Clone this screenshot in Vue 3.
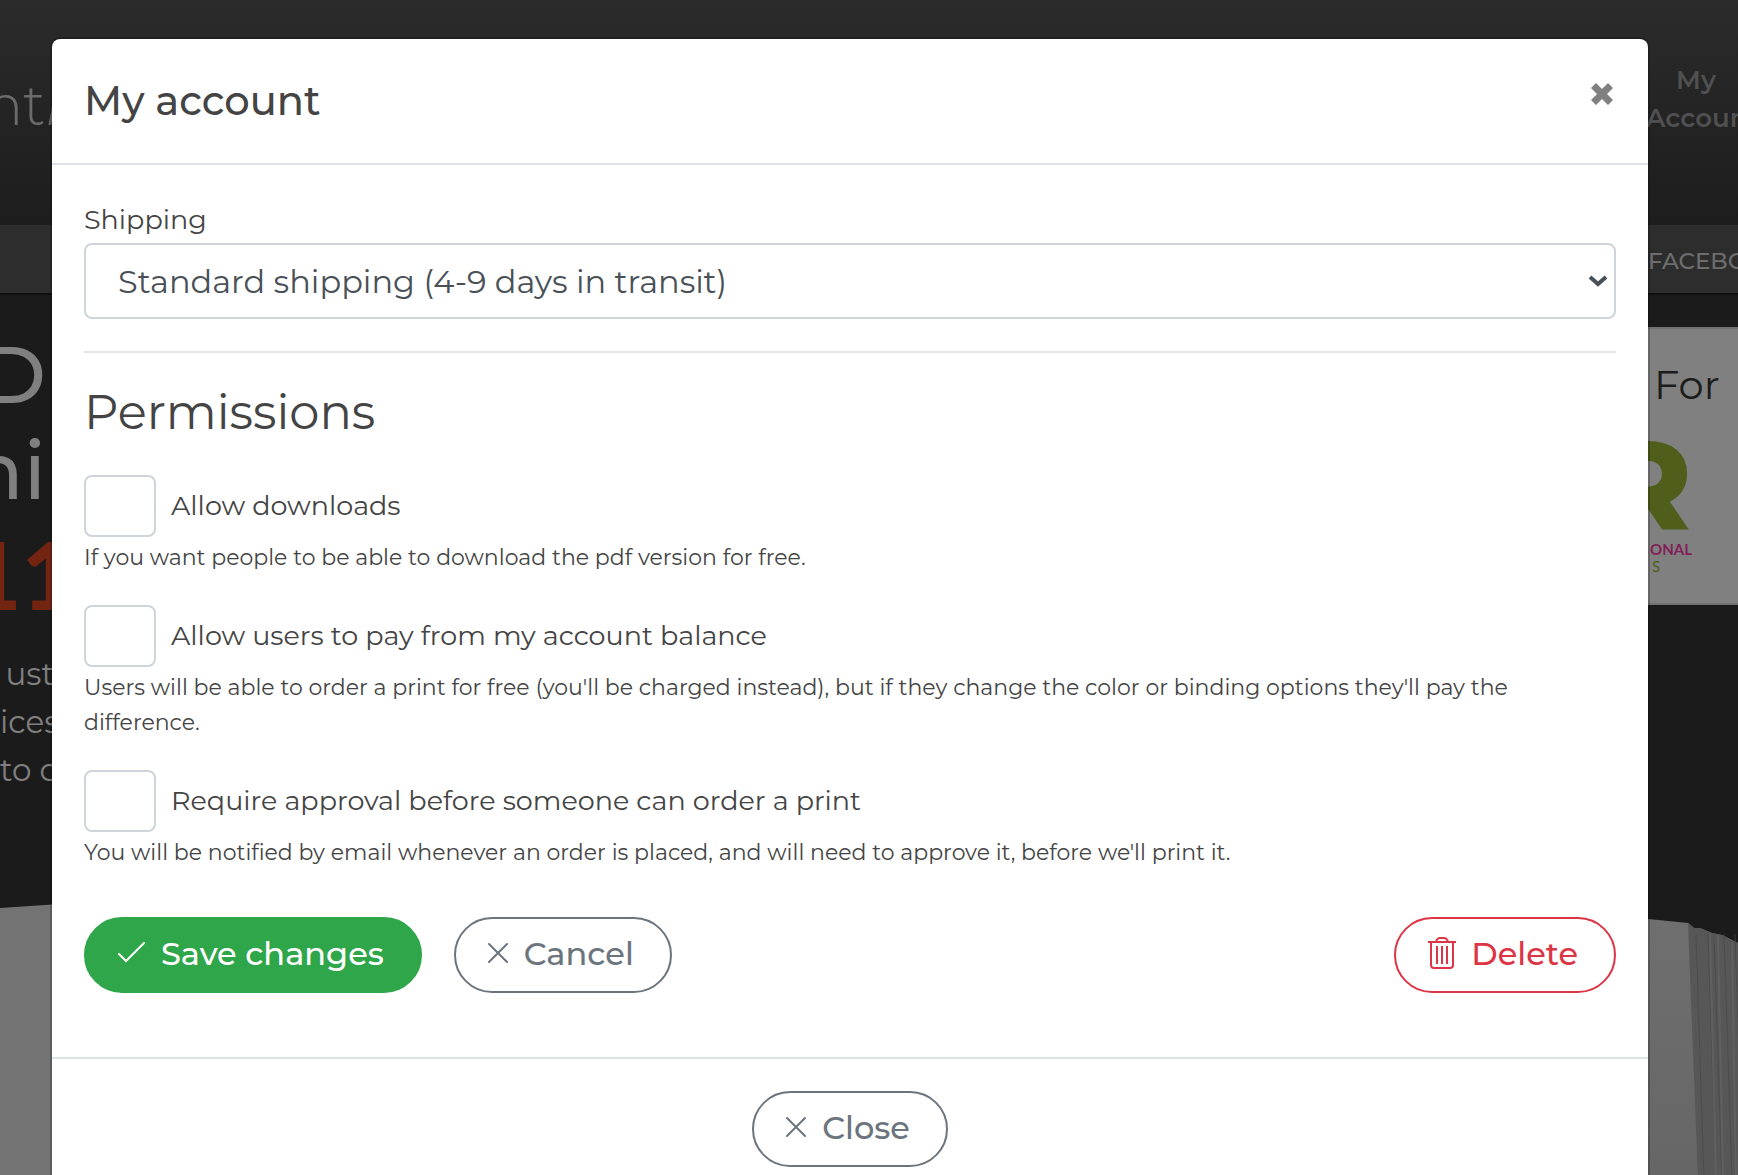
<script setup>
import { ref } from 'vue'

const shipping = ref('standard')
const permissions = ref([
  {
    id: 'downloads',
    label: 'Allow downloads',
    help: 'If you want people to be able to download the pdf version for free.',
    on: false,
  },
  {
    id: 'balance',
    label: 'Allow users to pay from my account balance',
    help: "Users will be able to order a print for free (you'll be charged instead), but if they change the color or binding options they'll pay the difference.",
    on: false,
  },
  {
    id: 'approval',
    label: 'Require approval before someone can order a print',
    help: "You will be notified by email whenever an order is placed, and will need to approve it, before we'll print it.",
    on: false,
  },
])
const streaks = [100, 112, 118, 128, 139, 146]
</script>

<template>
  <div class="screen">
    <div class="page">
      <header class="top">
        <span class="brand"><span>nt<i>l</i></span></span>
        <a class="account" href="#">My<br />Account</a>
      </header>
      <nav class="nav"><a href="#">FACEBOOK</a></nav>
      <section class="hero">
        <div class="pitch">
          <div class="big"><span>D</span></div>
          <div class="big"><span>ni</span></div>
          <div class="price"><span>11</span></div>
          <div class="copy">
            <div>ust</div>
            <div>ices</div>
            <div>to c</div>
          </div>
        </div>
        <aside class="card">
          <div class="card-title">For</div>
          <div class="logo">
            <div class="logo-r">R</div>
            <div class="logo-name">ONAL</div>
            <div class="logo-sub">S</div>
          </div>
        </aside>
      </section>
      <div class="book">
        <svg width="60" height="280" viewBox="0 0 60 280" preserveAspectRatio="none" aria-hidden="true">
          <path d="M0 8 60 4V280H0z" fill="#737373" />
        </svg>
        <svg width="98" height="280" viewBox="0 0 98 280" aria-hidden="true">
          <defs>
            <linearGradient id="leaf" x1="0" y1="0" x2="0" y2="1">
              <stop offset="0" stop-color="#6f6f6f" />
              <stop offset="1" stop-color="#666" />
            </linearGradient>
          </defs>
          <path d="M0 18 8 19 48 23 54 28 60 28 72 33 82 35 98 43V280H0z" fill="url(#leaf)" />
          <path d="M48 23 54 28 60 28 72 33 82 35 98 43V280H58z" fill="#575757" />
          <g stroke="#494949" stroke-width="1" opacity=".7">
            <path v-for="x in streaks" :key="x" :d="`M${x - 44} 34 L${x - 36} 280`" />
          </g>
          <path d="M70 34 76 280M78 36 83 280M92 42 96 280" stroke="#606060" stroke-width="2" />
        </svg>
      </div>
    </div>

    <div class="modal" role="dialog" aria-labelledby="modal-title">
      <div class="modal-head">
        <h5 id="modal-title">My account</h5>
        <button class="x" type="button" aria-label="Dismiss">
          <svg width="22" height="22" viewBox="0 0 22 22" aria-hidden="true">
            <path d="M5 0 11 6 17 0 22 5 16 11 22 17 17 22 11 16 5 22 0 17 6 11 0 5z" fill="#808080" />
          </svg>
        </button>
      </div>

      <form class="modal-body" @submit.prevent>
        <label class="field-label" for="shipping">Shipping</label>
        <div class="select-wrap">
          <select id="shipping" v-model="shipping">
            <option value="standard">Standard shipping (4-9 days in transit)</option>
          </select>
          <svg class="caret" width="20" height="14" viewBox="0 0 20 14" aria-hidden="true">
            <path d="M2 3 10 10 18 3" fill="none" stroke="#495057" stroke-width="4" />
          </svg>
        </div>
        <hr />
        <h3>Permissions</h3>
        <div v-for="p in permissions" :key="p.id" class="perm">
          <div class="perm-row">
            <input :id="p.id" v-model="p.on" type="checkbox" />
            <label :for="p.id">{{ p.label }}</label>
          </div>
          <p>{{ p.help }}</p>
        </div>
        <div class="actions">
          <button class="btn save" type="submit">
            <svg width="29" height="24" viewBox="0 0 29 24" aria-hidden="true">
              <path d="M1 13 8 20 26 2" fill="none" stroke="currentColor" stroke-width="2" stroke-linecap="round" />
            </svg>
            Save changes
          </button>
          <button class="btn cancel" type="button">
            <svg width="22" height="24" viewBox="0 0 22 24" aria-hidden="true">
              <path d="M1 3 19 21M19 3 1 21" fill="none" stroke="currentColor" stroke-width="2" stroke-linecap="round" />
            </svg>
            Cancel
          </button>
          <button class="btn delete" type="button">
            <svg width="29" height="32" viewBox="0 0 29 32" aria-hidden="true">
              <path
                d="M0 5H28M3 5V28Q3 31 6 31H22Q25 31 25 28V5M8 5Q9 1 12 1H16Q19 1 20 5M9 9V27M14 9V27M19 9V27"
                fill="none" stroke="currentColor" stroke-width="2"
              />
            </svg>
            Delete
          </button>
        </div>
      </form>

      <div class="modal-foot">
        <button class="btn cancel" type="button">
          <svg width="22" height="24" viewBox="0 0 22 24" aria-hidden="true">
            <path d="M1 3 19 21M19 3 1 21" fill="none" stroke="currentColor" stroke-width="2" stroke-linecap="round" />
          </svg>
          Close
        </button>
      </div>
    </div>
  </div>
</template>

<style>
html, body { margin: 0; background: #1b1b1b; }
body { overflow: hidden; }
</style>

<style scoped>
.screen {
  position: relative;
  height: 100vh;
  overflow: hidden;
  color: #444;
  font-family: Montserrat, Inter, "Open Sans", sans-serif;
}
.screen * { box-sizing: border-box; }

/* dimmed page behind the dialog */
.page {
  position: absolute;
  inset: 0;
  display: flex;
  flex-direction: column;
  overflow: hidden;
  white-space: nowrap;
}
.top, .nav, .hero { flex-shrink: 0; }
.top {
  display: flex;
  justify-content: space-between;
  height: 225px;
  padding-top: 61px;
  background: linear-gradient(#2b2b2b, #1d1d1d);
}
.brand {
  display: flex;
  justify-content: flex-end;
  width: 60px;
  font-size: 56px;
  line-height: 88px;
  font-weight: 300;
  color: #6b6b6b;
}
.account {
  width: 100px;
  margin-right: -8px;
  font-size: 26px;
  line-height: 38px;
  font-weight: 600;
  color: #505050;
  text-align: center;
  text-decoration: none;
}
.nav {
  display: flex;
  justify-content: flex-end;
  height: 70px;
  background: #2d2d2d;
  border-bottom: 2px solid #0e0e0e;
}
.nav a { width: 90px; font-size: 23px; line-height: 72px; font-weight: 500; color: #6e6e6e; text-decoration: none; }
.hero { display: flex; justify-content: space-between; height: 605px; padding-top: 32px; }
.pitch { width: 60px; color: #808080; }
.big, .price { display: flex; justify-content: flex-end; width: 46px; font-size: 80px; line-height: 96px; font-weight: 500; }
.price {
  width: 76px;
  height: 110px;
  align-items: center;
  font-family: Lato, sans-serif;
  font-size: 94px;
  font-weight: 900;
  color: #732512;
}
.copy { width: 54px; padding-top: 21px; font-size: 31px; line-height: 48px; font-weight: 400; text-align: right; }
.card {
  width: 100px;
  height: 278px;
  padding: 24px 0 0 16px;
  background: #808080;
  border: 2px solid #727272;
  border-width: 2px 0;
}
.card-title { font-size: 40px; line-height: 64px; color: #1c1c1c; }
.logo { display: flex; flex-direction: column; align-items: flex-end; width: 38px; padding-top: 12px; }
.logo-r { font-size: 126px; line-height: 112px; font-weight: 800; color: #4f5f1b; }
.logo-name { font-family: Lato, sans-serif; font-size: 15px; line-height: 16px; font-weight: 700; color: #821f58; }
.logo-sub { width: 40px; font-family: Lato, sans-serif; font-size: 15px; line-height: 18px; color: #4f5f1b; }
.book { display: flex; flex: 1; justify-content: space-between; }

/* dialog */
.modal {
  position: relative;
  margin: 37px 88px 0 50px;
  background: #fff;
  background-clip: padding-box;
  border: 2px solid rgba(0, 0, 0, 0.2);
  border-radius: 10px;
}
.modal-head {
  display: flex;
  justify-content: space-between;
  align-items: flex-start;
  padding: 32px;
  border-bottom: 2px solid #dee2e6;
}
h5 { margin: 0; font-size: 40px; line-height: 60px; font-weight: 500; }
.x { margin: 12px 3px 0; padding: 0; border: 0; background: none; line-height: 0; }
.modal-body { display: block; padding: 32px 32px 64px; }
.field-label { display: block; font-size: 27px; line-height: 46px; font-weight: 400; }
.select-wrap { position: relative; }
select {
  display: block;
  width: 100%;
  height: 76px;
  padding: 0 32px;
  appearance: none;
  border: 2px solid #ced4da;
  border-radius: 8px;
  background: #fff;
  color: #495057;
  font-family: inherit;
  font-size: 32px;
  font-weight: 400;
}
.caret { position: absolute; right: 8px; top: 31px; pointer-events: none; }
hr { margin: 32px 0; border: 0; border-top: 2px solid #e5e5e5; }
h3 { margin: 0 0 36px; font-size: 48px; line-height: 54px; font-weight: 400; }
.perm { margin-bottom: 30px; }
.perm-row { display: flex; align-items: center; gap: 15px; font-size: 27px; font-weight: 400; }
.perm-row label { padding-bottom: 2px; }
input {
  width: 72px;
  height: 62px;
  margin: 0;
  appearance: none;
  border: 2px solid #ced4da;
  border-radius: 8px;
  background: #fff;
}
p { margin: 3px 0 0; font-size: 22px; line-height: 35px; font-weight: 400; }
.actions { display: flex; gap: 32px; padding-top: 17px; }
.btn {
  display: flex;
  align-items: center;
  gap: 14px;
  height: 76px;
  padding: 0 36px 4px 32px;
  border: 2px solid;
  border-radius: 38px;
  background: #fff;
  font-family: inherit;
  font-size: 32px;
  font-weight: 500;
}
.save { background: #30a64a; border-color: #30a64a; color: #fff; }
.cancel { color: #6c757d; }
.delete { margin-left: auto; color: #dc3545; }
.modal-foot { display: flex; justify-content: center; padding: 32px; border-top: 2px solid #dee2e6; }
</style>
